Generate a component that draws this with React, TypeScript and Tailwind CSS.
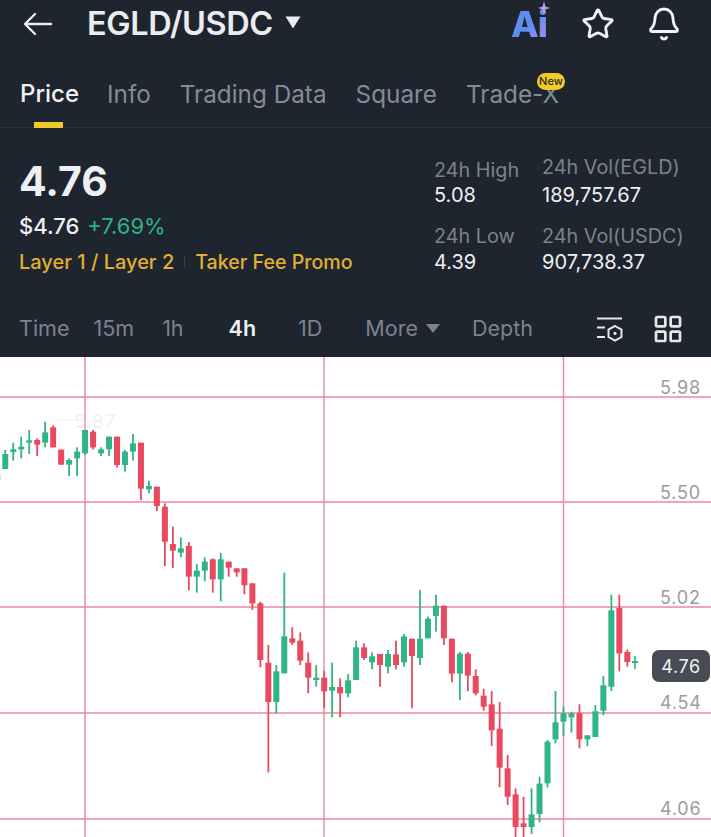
import { Bell, LayoutGrid, Star } from "lucide-react";

type Candle = [string, number, number, number, number];

// candle values are read off the 3x crops: [colour, wick top, body top, body bottom, wick bottom]
const left: Candle[] = [
  ["g", 215, 225, 240, 245], ["g", 150, 162, 207, 207], ["g", 128, 148, 156, 182], ["g", 110, 140, 148, 175],
  ["g", 90, 121, 128, 162], ["r", 115, 120, 134, 168], ["g", 65, 97, 128, 142], ["r", 76, 82, 142, 142],
  ["r", 149, 149, 194, 194], ["g", 175, 180, 194, 228], ["g", 142, 155, 175, 228], ["g", 90, 90, 160, 165],
  ["r", 90, 95, 142, 148], ["g", 142, 148, 160, 168], ["g", 110, 110, 148, 168], ["r", 110, 110, 195, 202],
  ["g", 150, 155, 195, 215], ["g", 102, 130, 155, 182], ["r", 128, 128, 266, 300], ["g", 242, 258, 268, 280],
  ["r", 260, 260, 318, 333], ["r", 310, 320, 425, 498], ["r", 380, 432, 452, 504], ["g", 412, 445, 458, 472],
  ["r", 426, 438, 530, 571], ["g", 492, 512, 530, 578], ["g", 472, 485, 512, 544], ["r", 475, 478, 538, 578],
  ["g", 458, 478, 538, 604], ["r", 485, 485, 503, 530], ["r", 505, 505, 517, 530],
];

const middle: Candle[] = [
  ["r", 25, 25, 76, 103], ["r", 70, 70, 130, 150], ["r", 125, 130, 300, 322], ["r", 255, 308, 426, 637],
  ["g", 315, 334, 426, 460], ["g", 38, 229, 340, 340], ["r", 202, 235, 248, 255], ["r", 217, 242, 302, 315],
  ["r", 277, 308, 353, 400], ["g", 315, 353, 360, 380], ["r", 333, 353, 394, 445], ["g", 308, 381, 392, 472],
  ["r", 355, 381, 400, 472], ["g", 342, 361, 400, 412], ["g", 242, 262, 360, 360], ["r", 250, 262, 294, 300],
  ["g", 277, 289, 307, 328], ["r", 282, 282, 315, 380], ["g", 270, 282, 320, 340], ["r", 242, 283, 315, 328],
  ["g", 222, 229, 307, 320], ["r", 236, 236, 288, 445], ["g", 90, 236, 294, 315], ["g", 170, 176, 235, 235],
  ["g", 104, 137, 168, 215], ["r", 137, 137, 235, 255], ["r", 236, 236, 341, 367], ["g", 276, 281, 341, 420],
  ["r", 276, 281, 347, 394],
];

const right: Candle[] = [
  ["r", 268, 288, 340, 346], ["r", 326, 347, 380, 392], ["r", 333, 373, 451, 498], ["r", 366, 446, 563, 622],
  ["r", 525, 565, 650, 675], ["r", 625, 643, 741, 790], ["r", 650, 730, 741, 790], ["g", 625, 703, 741, 762],
  ["g", 590, 611, 702, 727], ["g", 480, 485, 610, 622], ["g", 333, 427, 478, 490], ["g", 380, 400, 425, 467],
  ["g", 395, 400, 412, 458], ["r", 373, 400, 478, 505], ["g", 466, 466, 478, 498], ["g", 375, 394, 471, 471],
  ["g", 288, 316, 392, 406], ["g", 44, 91, 320, 333], ["r", 44, 84, 220, 274], ["r", 208, 216, 246, 260],
];

const CHART_TOP = 357;

function toBars(list: Candle[], startX: number, baseY: number) {
  return list.map((c, i) => ({
    green: c[0] === "g",
    x: startX + i * 7.98,
    wt: baseY + c[1] / 3 - CHART_TOP,
    bt: baseY + c[2] / 3 - CHART_TOP,
    bb: baseY + c[3] / 3 - CHART_TOP,
    wb: baseY + c[4] / 3 - CHART_TOP,
  }));
}

const bars = [
  ...toBars(left, -2.7, 400),
  ...toBars(middle, 244.4, 560),
  ...toBars(right, 475.7, 580),
];

const hLines = [40, 145, 250, 356, 462];
const vLines = [85, 324, 563.5];
const axis = [
  { label: "5.98", className: "top-[19px]" },
  { label: "5.50", className: "top-[124px]" },
  { label: "5.02", className: "top-[229px]" },
  { label: "4.54", className: "top-[334px]" },
  { label: "4.06", className: "top-[440px]" },
];

function Chart() {
  return (
    <div className="relative h-[480px] bg-white">
      <svg width="711" height="480" className="block">
        {hLines.map((y) => (
          <line key={y} x1="0" x2="711" y1={y} y2={y} stroke="#e8889d" strokeWidth="1.4" />
        ))}
        {vLines.map((x) => (
          <line key={x} x1={x} x2={x} y1="0" y2="480" stroke="#e8889d" strokeWidth="1.4" />
        ))}
        <line x1="50" x2="75" y1="63" y2="63" stroke="#f1f1f1" strokeWidth="1" />
        {bars.map((b) => (
          <g key={b.x} fill={b.green ? "#30b486" : "#e9495f"}>
            <rect x={b.x - 0.9} y={b.wt} width="1.8" height={b.wb - b.wt} />
            <rect x={b.x - 3} y={b.bt} width="6" height={Math.max(b.bb - b.bt, 2)} />
          </g>
        ))}
        <rect x="634.2" y="299" width="1.6" height="13" fill="#30b486" />
        <rect x="632" y="304" width="6" height="2" fill="#30b486" />
      </svg>
      <span className="absolute left-[74px] top-[53px] text-[19px] leading-[24px] tracking-[1px] text-[#f0f0f0]">
        5.87
      </span>
      {axis.map((a) => (
        <span
          key={a.label}
          className={`absolute left-[660px] text-[18px] leading-[24px] tracking-[0.8px] text-[#9b9b9b] ${a.className}`}
        >
          {a.label}
        </span>
      ))}
      <div className="absolute left-[652px] top-[293px] flex h-[32px] w-[58px] items-center justify-center rounded-[7px] bg-[#474c54] text-[18px] tracking-[0.6px] text-[#f2f2f2]">
        4.76
      </div>
    </div>
  );
}

function BackArrow() {
  return (
    <svg width="30" height="24" viewBox="0 0 30 24" fill="none" stroke="#eaecef" strokeWidth="2.4" strokeLinecap="round" strokeLinejoin="round">
      <path d="M28 12H3" />
      <path d="M12 2L2 12l10 10" />
    </svg>
  );
}

function DepthIcon() {
  return (
    <svg width="27" height="25" viewBox="0 0 27 25" fill="none" stroke="#e6e8ea" strokeWidth="2">
      <path d="M1 1.5h25" />
      <path d="M1 10.5h8" />
      <path d="M1 20h8" />
      <path d="M19 9l6.5 3.7v7.3L19 23.7 12.5 20v-7.3z" />
      <circle cx="19" cy="16.4" r="1.6" fill="#e6e8ea" stroke="none" />
    </svg>
  );
}

function AiMark() {
  return (
    <div className="relative h-[32px] w-[38px]">
      <span className="block bg-gradient-to-br from-[#6f8cf0] via-[#5b8cf2] to-[#a98fe8] bg-clip-text text-[36px] font-extrabold leading-[32px] tracking-[-1px] text-transparent">
        Ai
      </span>
      <svg width="12" height="14" viewBox="0 0 12 14" className="absolute left-[27px] top-[-7px]">
        <path d="M6 0l1.4 5.4L12 7 7.4 8.6 6 14 4.6 8.6 0 7l4.6-1.6z" fill="#c59ae6" />
      </svg>
    </div>
  );
}

function Stat({ label, value, className, valueClass }: { label: string; value: string; className?: string; valueClass?: string }) {
  return (
    <div className={className}>
      <div className="text-[19.8px] leading-[24px] text-[#7c838d]">{label}</div>
      <div className={`text-[20px] leading-[26px] text-[#eef0f2] ${valueClass ?? ""}`}>{value}</div>
    </div>
  );
}

export default function App() {
  return (
    <div className="h-[837px] w-[711px] overflow-hidden bg-white font-['Inter',sans-serif]">
      <div className="h-[357px] bg-[#1e252e]">
        <div className="flex h-[48px] items-center pl-[23px] pr-[29px]">
          <BackArrow />
          <div className="ml-[34px] text-[32.5px] font-semibold tracking-[-0.4px] text-[#eaecef]">EGLD/USDC</div>
          <svg width="16" height="13" viewBox="0 0 16 13" className="mb-[3px] ml-[12px]">
            <path d="M0.5 0.5h15L8 12.5z" fill="#eaecef" />
          </svg>
          <div className="ml-auto flex items-center">
            <AiMark />
            <Star size={34} strokeWidth={2} className="ml-[32px] text-[#f3f4f5]" />
            <Bell size={36} strokeWidth={1.9} className="ml-[31px] text-[#f3f4f5]" />
          </div>
        </div>

        <div className="relative flex h-[80px] gap-[29px] border-b border-[#2b323b] pl-[20px] pt-[28px] text-[24.3px] leading-[36px] text-[#848b96]">
          <div className="relative w-[58px] text-[24px] font-medium text-[#f2f3f5]">
            Price
            <div className="absolute left-[14px] top-[46px] h-[6px] w-[29px] bg-[#f0c92f]" />
          </div>
          <div>Info</div>
          <div>Trading Data</div>
          <div>Square</div>
          <div className="relative">
            Trade-X
            <div className="absolute left-[71px] top-[-3px] flex h-[17px] w-[28px] items-center justify-center rounded-[9px] bg-[#f3c92c] text-[11px] font-medium leading-none text-[#2a2a20]">
              New
            </div>
          </div>
        </div>

        <div className="flex h-[170px] pl-[19px] pt-[28px]">
          <div className="w-[415px]">
            <div className="text-[41px] font-bold leading-[50px] text-[#eef0f3]">4.76</div>
            <div className="mt-[6px] flex gap-[8px] text-[22px] leading-[28px]">
              <span className="font-medium text-[#eef0f3]">$4.76</span>
              <span className="text-[#2fb386]">+7.69%</span>
            </div>
            <div className="mt-[9px] flex items-center text-[20px] font-medium leading-[26px] text-[#e0b02e]">
              <span>Layer 1 / Layer 2</span>
              <span className="mx-[10px] h-[10px] w-px bg-[#3a424c]" />
              <span className="text-[19.6px]">Taker Fee Promo</span>
            </div>
          </div>
          <div className="-mt-px flex">
            <div className="w-[108px] pt-[3px]">
              <Stat label="24h High" value="5.08" />
              <Stat label="24h Low" value="4.39" className="mt-[16px]" valueClass="mt-[1px]" />
            </div>
            <div>
              <Stat label="24h Vol(EGLD)" value="189,757.67" valueClass="mt-[3px]" />
              <Stat label="24h Vol(USDC)" value="907,738.37" className="mt-[16px]" valueClass="mt-[1px]" />
            </div>
          </div>
        </div>

        <div className="flex h-[59px] items-start pl-[19px] pr-[27px] pt-[15px] text-[21.5px] leading-[30px] text-[#7c838d]">
          <div className="flex">
            <span>Time</span>
            <span className="ml-[24px]">15m</span>
            <span className="ml-[28px]">1h</span>
            <span className="ml-[45px] font-semibold text-[#eef0f3]">4h</span>
            <span className="ml-[42px]">1D</span>
            <span className="ml-[43px] flex items-center">
              More
              <svg width="14" height="9" viewBox="0 0 14 9" className="ml-[8px]">
                <path d="M0 0h14L7 9z" fill="#7c838d" />
              </svg>
            </span>
            <span className="ml-[32px]">Depth</span>
          </div>
          <div className="ml-auto flex items-center gap-[29px]">
            <DepthIcon />
            <LayoutGrid size={32} strokeWidth={2} className="text-[#e6e8ea]" />
          </div>
        </div>
      </div>
      <Chart />
    </div>
  );
}
